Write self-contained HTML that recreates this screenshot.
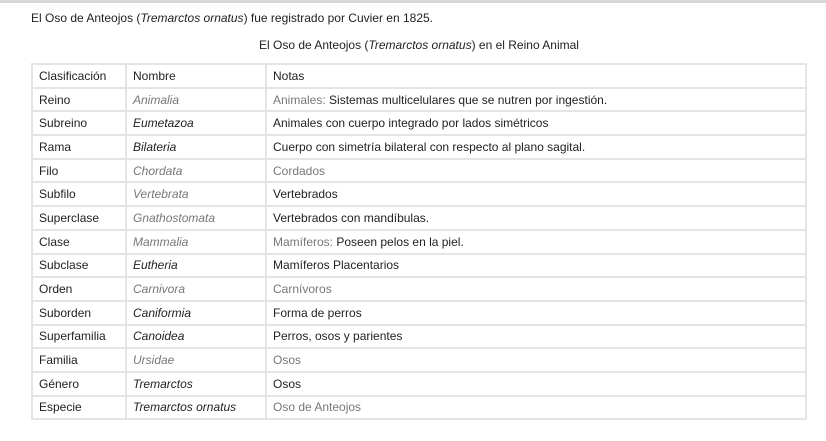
<!DOCTYPE html>
<html><head><meta charset="utf-8"><style>
body{margin:0;width:826px;height:441px;background:#fff;font-family:"Liberation Sans",Arial,sans-serif;font-size:12px;color:#222;position:relative;overflow:hidden}
.bar{position:absolute;left:0;top:0;width:826px;height:3px;background:#d6d6d6}
.p{position:absolute;left:31px;top:11px}
.cap{position:absolute;left:0;width:838px;text-align:center;top:38px}
table{position:absolute;left:31px;top:63px;border-collapse:collapse;width:776px;table-layout:fixed}
tr{height:23.7px}
td{border:2px solid #e4e4e4;padding:0 6px;white-space:nowrap}
col.a{width:94px}col.b{width:140px}
.g{color:#777}
</style></head><body>
<div class="bar"></div>
<div class="p">El Oso de Anteojos (<i>Tremarctos ornatus</i>) fue registrado por Cuvier en 1825.</div>
<div class="cap">El Oso de Anteojos (<i>Tremarctos ornatus</i>) en el Reino Animal</div>
<table>
<colgroup><col class="a"><col class="b"><col></colgroup>
<tr><td>Clasificación</td><td>Nombre</td><td>Notas</td></tr>
<tr><td>Reino</td><td class="g"><i>Animalia</i></td><td><span class="g">Animales:</span> Sistemas multicelulares que se nutren por ingestión.</td></tr>
<tr><td>Subreino</td><td><i>Eumetazoa</i></td><td>Animales con cuerpo integrado por lados simétricos</td></tr>
<tr><td>Rama</td><td><i>Bilateria</i></td><td>Cuerpo con simetría bilateral con respecto al plano sagital.</td></tr>
<tr><td>Filo</td><td class="g"><i>Chordata</i></td><td class="g">Cordados</td></tr>
<tr><td>Subfilo</td><td class="g"><i>Vertebrata</i></td><td>Vertebrados</td></tr>
<tr><td>Superclase</td><td class="g"><i>Gnathostomata</i></td><td>Vertebrados con mandíbulas.</td></tr>
<tr><td>Clase</td><td class="g"><i>Mammalia</i></td><td><span class="g">Mamíferos:</span> Poseen pelos en la piel.</td></tr>
<tr><td>Subclase</td><td><i>Eutheria</i></td><td>Mamíferos Placentarios</td></tr>
<tr><td>Orden</td><td class="g"><i>Carnivora</i></td><td class="g">Carnívoros</td></tr>
<tr><td>Suborden</td><td><i>Caniformia</i></td><td>Forma de perros</td></tr>
<tr><td>Superfamilia</td><td><i>Canoidea</i></td><td>Perros, osos y parientes</td></tr>
<tr><td>Familia</td><td class="g"><i>Ursidae</i></td><td class="g">Osos</td></tr>
<tr><td>Género</td><td><i>Tremarctos</i></td><td>Osos</td></tr>
<tr><td>Especie</td><td><i>Tremarctos ornatus</i></td><td class="g">Oso de Anteojos</td></tr>
</table>
</body></html>
